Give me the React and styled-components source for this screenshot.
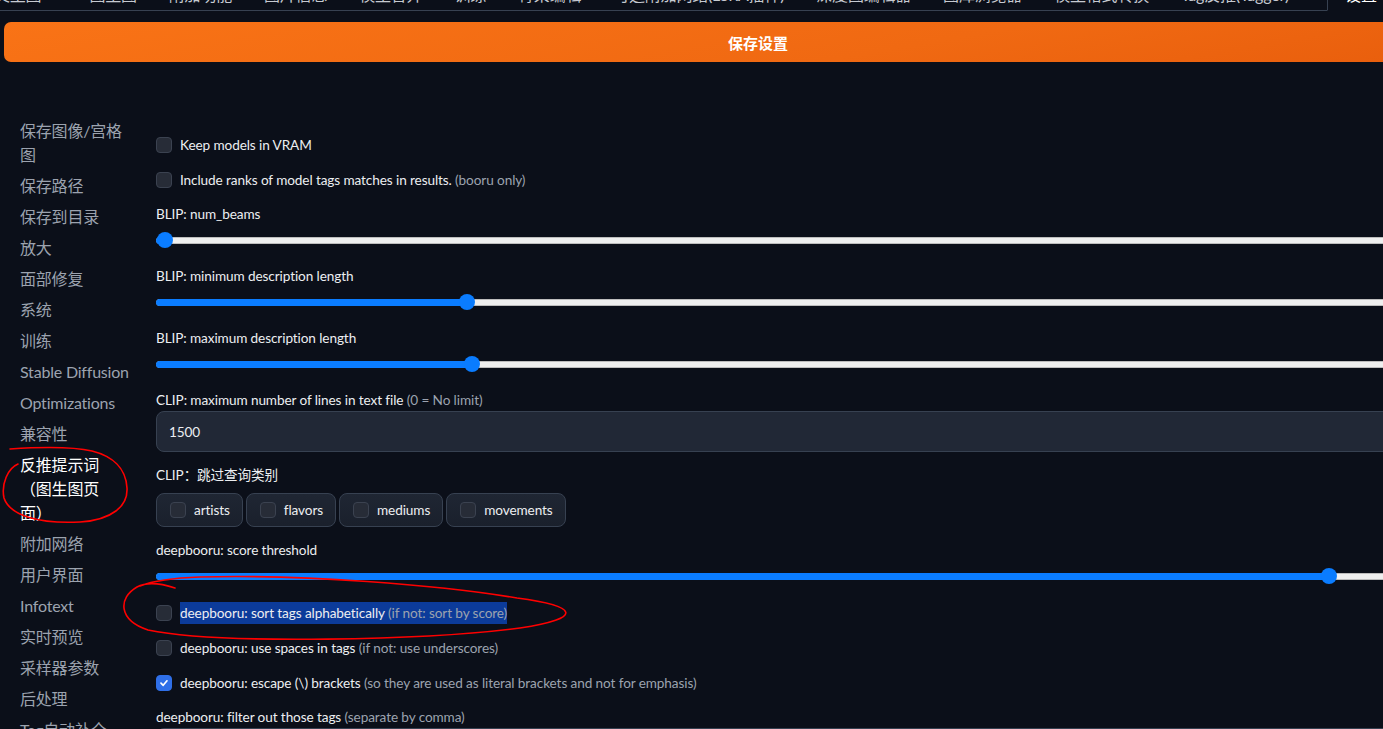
import React from 'react';
import styled, { createGlobalStyle } from 'styled-components';

const GlobalStyle = createGlobalStyle`
  html, body {
    margin: 0;
    padding: 0;
    background: #0b0f19;
    overflow: hidden;
  }
  body {
    font-family: Lato, "Noto Sans CJK SC", sans-serif;
    color: #e5e7eb;
    text-spacing-trim: space-all;
  }
`;

const Page = styled.div`
  position: relative;
  width: 1516px;
  height: 729px;
  overflow: hidden;
`;

const TabBar = styled.div`
  display: flex;
  align-items: flex-end;
  height: 10px;
  border-bottom: 1px solid #374151;
  box-sizing: content-box;
`;

const Tab = styled.div`
  flex: none;
  padding: 0 16px 5px;
  font-size: 16px;
  line-height: 20px;
  letter-spacing: -0.2px;
  white-space: nowrap;
  color: ${p => (p.$active ? '#ffffff' : '#c6cad1')};
  &:first-child {
    margin-left: -22px;
    margin-right: 16px;
  }
  ${p => p.$active && `
    margin-left: 22px;
    padding-left: 17px;
    margin-bottom: -1px;
    border: 1px solid #374151;
    border-bottom: 1px solid #0b0f19;
    background: #0b0f19;
  `}
`;

const SaveButton = styled.button`
  display: block;
  width: calc(100% - 8px);
  height: 40px;
  margin: 11px 4px 0;
  border: none;
  border-radius: 7px;
  background: linear-gradient(170deg, #f97316 0%, #f06912 60%, #e85d0c 100%);
  color: #fff;
  font-family: inherit;
  font-size: 15px;
  font-weight: 700;
`;

const Main = styled.div`
  display: flex;
  padding-right: 16px;
`;

const Sidebar = styled.nav`
  flex: none;
  width: 109px;
  padding: 53px 0 0 20px;
  margin-right: -1px;
  display: flex;
  flex-direction: column;
`;

const NavItem = styled.div`
  padding: 4px 0 3px;
  font-size: 16px;
  line-height: 24px;
  letter-spacing: -0.2px;
  color: ${p => (p.$active ? '#ffffff' : '#9ca3af')};
`;

const Content = styled.div`
  flex: 1;
  margin-left: 28px;
  padding-top: 72px;
  display: flex;
  flex-direction: column;
  gap: 13px;
  font-size: 13.6px;
  letter-spacing: -0.1px;
`;

const Field = styled.div`
  display: flex;
  flex-direction: column;
  gap: ${p => (p.$gap ?? 3)}px;
`;

const Label = styled.div`
  line-height: 20px;
  color: #eceef1;
  white-space: nowrap;
`;

const Hint = styled.span`
  color: #9ca3af;
`;

const CheckRow = styled.label`
  display: flex;
  align-items: center;
  gap: 8px;
  height: 22px;
  color: #eceef1;
  white-space: nowrap;
`;

const Text = styled.span`
  line-height: 20px;
  background: ${p => (p.$selected ? '#0c3b9a' : 'transparent')};
  padding: 1px 0;
`;

const Box = styled.span`
  flex: none;
  width: 16px;
  height: 16px;
  box-sizing: border-box;
  border-radius: 4px;
  border: 1px solid ${p => (p.$checked ? '#2f6fe8' : '#3b4250')};
  background: ${p => (p.$checked ? '#2f6fe8' : '#272c37')};
  display: flex;
  align-items: center;
  justify-content: center;
`;

const SliderWrap = styled.div`
  height: 26px;
  display: flex;
  align-items: center;
`;

const Rail = styled.div`
  position: relative;
  flex: 1;
  height: 7px;
  box-sizing: border-box;
  border: 1px solid #bdbdbd;
  border-radius: 4px;
  background: #efefef;
`;

const Fill = styled.div`
  position: absolute;
  left: -1px;
  top: -1px;
  bottom: -1px;
  border-radius: 4px;
  background: #0a7cff;
`;

const Thumb = styled.div`
  position: absolute;
  top: 50%;
  width: 16px;
  height: 16px;
  margin-top: -8px;
  border-radius: 50%;
  background: #0a7cff;
`;

const TextInput = styled.div`
  height: 41px;
  box-sizing: border-box;
  border: 1px solid #374151;
  border-radius: 8px;
  background: #212836;
  padding: 0 12px;
  display: flex;
  align-items: center;
  color: #eceef1;
`;

const Group = styled.div`
  display: flex;
  gap: 3px;
  margin-top: 8px;
`;

const GroupItem = styled.label`
  display: flex;
  align-items: center;
  gap: 8px;
  height: 34px;
  box-sizing: border-box;
  padding: 0 12px 0 13px;
  border: 1px solid #374151;
  border-radius: 8px;
  background: linear-gradient(#1f2633, #1a202c);
  color: #eceef1;
`;

const Overlay = styled.svg`
  position: absolute;
  left: 0;
  top: 0;
  pointer-events: none;
`;

const Check = ({ checked }) => (
  <Box $checked={checked}>
    {checked && (
      <svg width="10" height="10" viewBox="0 0 10 10">
        <path d="M2 5.2 L4.2 7.3 L8 2.8" fill="none" stroke="#fff" strokeWidth="1.7" strokeLinecap="round" strokeLinejoin="round" />
      </svg>
    )}
  </Box>
);

const Slider = ({ value }) => (
  <SliderWrap>
    <Rail>
      <Fill style={{ width: `calc(10px + ${value} * (100% - 16px))` }} />
      <Thumb style={{ left: `calc(${value} * (100% - 16px))` }} />
    </Rail>
  </SliderWrap>
);

const tabs = ['文生图', '图生图', '附加功能', '图片信息', '模型合并', '训练', '骨架编辑',
  '可选附加网络(LoRA插件)', '深度图编辑器', '图库浏览器', '模型格式转换', 'Tag反推(Tagger)'];

const sections = ['保存图像/宫格图', '保存路径', '保存到目录', '放大', '面部修复', '系统', '训练',
  'Stable Diffusion', 'Optimizations', '兼容性', '反推提示词（图生图页面）', '附加网络', '用户界面',
  'Infotext', '实时预览', '采样器参数', '后处理', 'Tag自动补全', '扩展'];

const categories = ['artists', 'flavors', 'mediums', 'movements'];

export default function App() {
  return (
    <Page>
      <GlobalStyle />
      <TabBar>
        {tabs.map(t => <Tab key={t}>{t}</Tab>)}
        <Tab $active>设置</Tab>
      </TabBar>
      <SaveButton>保存设置</SaveButton>
      <Main>
        <Sidebar>
          {sections.map(s => (
            <NavItem key={s} $active={s.startsWith('反推')}>{s}</NavItem>
          ))}
        </Sidebar>
        <Content>
          <Field $gap={13}>
            <CheckRow><Check /><Text>Keep models in VRAM</Text></CheckRow>
            <CheckRow><Check /><Text>Include ranks of model tags matches in results. <Hint>(booru only)</Hint></Text></CheckRow>
          </Field>
          <Field>
            <Label>BLIP: num_beams</Label>
            <Slider value={0} />
          </Field>
          <Field>
            <Label>BLIP: minimum description length</Label>
            <Slider value={0.2275} />
          </Field>
          <Field>
            <Label>BLIP: maximum description length</Label>
            <Slider value={0.2313} />
          </Field>
          <Field $gap={1}>
            <Label>CLIP: maximum number of lines in text file <Hint>(0 = No limit)</Hint></Label>
            <TextInput>1500</TextInput>
          </Field>
          <Field $gap={0}>
            <Label>CLIP：跳过查询类别</Label>
            <Group>
              {categories.map(c => (
                <GroupItem key={c}><Check />{c}</GroupItem>
              ))}
            </Group>
          </Field>
          <Field>
            <Label>deepbooru: score threshold</Label>
            <Slider value={0.878} />
          </Field>
          <Field $gap={13}>
            <CheckRow><Check /><Text $selected>deepbooru: sort tags alphabetically <Hint>(if not: sort by score)</Hint></Text></CheckRow>
            <CheckRow><Check /><Text>deepbooru: use spaces in tags <Hint>(if not: use underscores)</Hint></Text></CheckRow>
            <CheckRow><Check checked /><Text>deepbooru: escape (\) brackets <Hint>(so they are used as literal brackets and not for emphasis)</Hint></Text></CheckRow>
          </Field>
          <Field $gap={1}>
            <Label>deepbooru: filter out those tags <Hint>(separate by comma)</Hint></Label>
            <TextInput />
          </Field>
        </Content>
      </Main>
      <Overlay width="1516" height="729" viewBox="0 0 1516 729">
        <g fill="none" stroke="#f00" strokeWidth="1.6" strokeLinecap="round">
          <path d="M18 464 C8 468 1 484 4 498 C10 516 40 524 80 522 C112 520 128 506 127 488 C126 468 112 456 92 451 C70 446 40 447 10 449" />
          <path d="M175 588 C160 583 146 582 137 587 C118 598 118 620 148 630 C220 645 430 640 520 628 C585 618 578 606 517 598 C440 585 300 574 200 577 C170 578 150 582 140 586" />
        </g>
      </Overlay>
    </Page>
  );
}
